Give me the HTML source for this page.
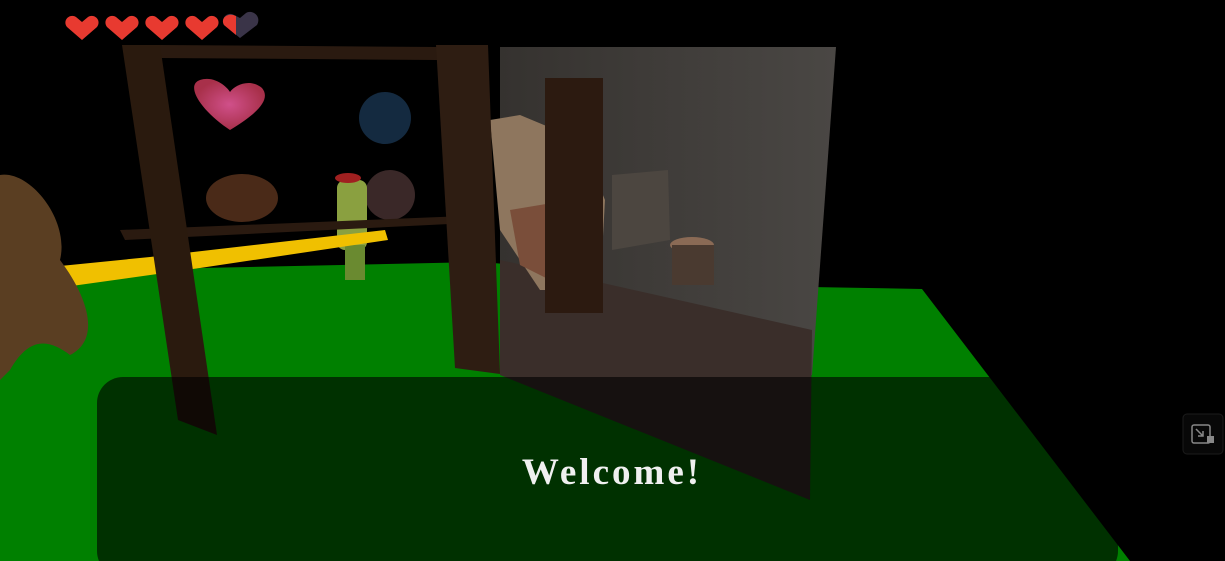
<!DOCTYPE html>
<html><head><style>
html,body{margin:0;padding:0;background:#000;width:1225px;height:561px;overflow:hidden}
svg{display:block}
</style></head><body>
<svg width="1225" height="561" viewBox="0 0 1225 561" xmlns="http://www.w3.org/2000/svg">
<defs>
<linearGradient id="wall" x1="0" y1="0" x2="1" y2="0">
<stop offset="0" stop-color="#35322f"/><stop offset="1" stop-color="#4a4744"/>
</linearGradient>
<radialGradient id="hrt" cx="0.5" cy="0.5" r="0.5">
<stop offset="0" stop-color="#d0508a"/><stop offset="1" stop-color="#a8304a"/>
</radialGradient>
</defs>
<rect width="1225" height="561" fill="#000"/>
<polygon points="0,292 200,268 480,262 810,287 922,289 1130,561 0,561" fill="#008000"/>
<path d="M230 130 C200 110 185 85 200 80 C215 75 228 88 230 92 C235 85 250 78 262 88 C272 100 255 115 230 130Z" fill="url(#hrt)"/>
<ellipse cx="385" cy="118" rx="26" ry="26" fill="#142a40"/>
<ellipse cx="242" cy="198" rx="36" ry="24" fill="#4a2a18"/>
<ellipse cx="390" cy="195" rx="25" ry="25" fill="#3a2828"/>
<polygon points="500,47 836,47 812,375 500,370" fill="url(#wall)"/>
<polygon points="500,260 812,330 810,500 500,375" fill="#3a2e2a"/>
<polygon points="612,175 668,170 670,240 612,250" fill="#4c4640"/>
<ellipse cx="692" cy="245" rx="22" ry="8" fill="#8a6a55"/>
<rect x="672" y="245" width="42" height="40" fill="#4a3a30"/>
<polygon points="490,120 520,115 580,140 605,200 600,290 540,290 500,230" fill="#8e765e"/>
<polygon points="510,210 600,195 600,260 570,290 520,265" fill="#7a4e3a"/>
<rect x="545" y="78" width="58" height="235" fill="#2c1a10"/>
<rect x="337" y="180" width="30" height="70" fill="#8aa040" rx="8"/>
<ellipse cx="348" cy="178" rx="13" ry="5" fill="#a02020"/>
<rect x="345" y="245" width="20" height="35" fill="#6a8a30"/>
<polygon points="0,272 150,257 385,230 388,240 200,268 0,296" fill="#f0c000"/>
<polygon points="120,230 490,215 490,222 125,240" fill="#2a1a10"/>
<path d="M0 175 C30 170 70 220 60 260 C90 300 100 340 70 355 C50 340 30 335 10 370 L0 380Z" fill="#5a3e22"/>
<polygon points="160,45 437,47 437,60 160,58" fill="#2a1a10"/>
<polygon points="122,45 160,45 217,435 178,420" fill="#2a1a0e"/>
<polygon points="436,45 488,45 500,374 455,368" fill="#2e1d12"/>
<rect x="97" y="377" width="1021" height="200" rx="26" fill="#000" fill-opacity="0.62"/>
<text x="612" y="484" text-anchor="middle" font-family="Liberation Serif, serif" font-weight="bold" font-size="37" fill="#f0f0f0" letter-spacing="3">Welcome!</text>
<g fill="#e83a30">
<path d="M82 40 L67 27 C62 20 70 13 76 17 L82 22 L88 17 C94 13 102 20 97 27Z"/>
<path d="M122 40 L107 27 C102 20 110 13 116 17 L122 22 L128 17 C134 13 142 20 137 27Z"/>
<path d="M162 40 L147 27 C142 20 150 13 156 17 L162 22 L168 17 C174 13 182 20 177 27Z"/>
<path d="M202 40 L187 27 C182 20 190 13 196 17 L202 22 L208 17 C214 13 222 20 217 27Z"/>
</g>
<path d="M240 38 L224 25 C220 18 228 11 234 15 L240 18 L246 13 C252 9 262 16 257 25Z" fill="#3a3448"/>
<path d="M236 35 L224 25 C220 18 228 12 236 16Z" fill="#e83a30"/>
<rect x="1183" y="414" width="40" height="40" rx="4" fill="#080808" stroke="#1c1c1c"/>
<rect x="1192" y="425" width="18" height="18" rx="2" fill="none" stroke="#888" stroke-width="1.5"/>
<path d="M1196 429 L1203 436 M1203 431 L1203 436 L1198 436" stroke="#888" stroke-width="1.5" fill="none"/>
<rect x="1207" y="436" width="7" height="7" fill="#888"/>
</svg>
</body></html>
